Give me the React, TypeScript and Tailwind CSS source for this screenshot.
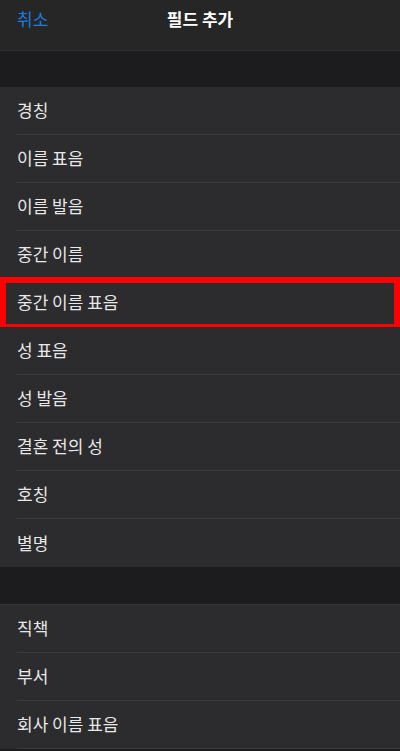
import React from "react";

const group1 = ["경칭", "이름 표음", "이름 발음", "중간 이름", "중간 이름 표음", "성 표음", "성 발음", "결혼 전의 성", "호칭", "별명"];
const group2 = ["직책", "부서", "회사 이름 표음"];

function Row({ label, last, highlight }: { label: string; last?: boolean; highlight?: boolean }) {
  return (
    <div className="relative h-[48px] pl-[17px] bg-[#2c2c2e]">
      <div className={"h-full flex items-center pb-[1px] text-[17px] text-[#e8e8e8] " + (last ? "" : "border-b border-[#3a3a3c]")}>
        {label}
      </div>
      {highlight && (
        <div className="absolute left-0 right-0 top-[-2px] bottom-[-3px] border-[6px] border-[#ff0000]" />
      )}
    </div>
  );
}

export default function App() {
  return (
    <div
      className="w-[400px] h-[751px] overflow-hidden bg-[#1c1c1e] flex flex-col"
      style={{ fontFamily: '"Noto Sans CJK KR", "Noto Sans", sans-serif' }}
    >
      <div className="h-[51px] shrink-0 bg-[#262626] border-b border-[#2e2e2e] grid grid-cols-[1fr_auto_1fr] items-start pt-[6px] px-[17px]">
        <span className="text-[17px] text-[#1a7ee0] justify-self-start">취소</span>
        <span className="text-[17px] font-semibold text-white">필드 추가</span>
        <span />
      </div>
      <div className="h-[36px] shrink-0" />
      <div className="shrink-0">
        {group1.map((l, i) => (
          <Row key={l} label={l} last={i === group1.length - 1} highlight={l === "중간 이름 표음"} />
        ))}
      </div>
      <div className="h-[37px] shrink-0" />
      <div className="shrink-0 border-t border-[#333335]">
        {group2.map((l) => (
          <Row key={l} label={l} />
        ))}
      </div>
    </div>
  );
}
